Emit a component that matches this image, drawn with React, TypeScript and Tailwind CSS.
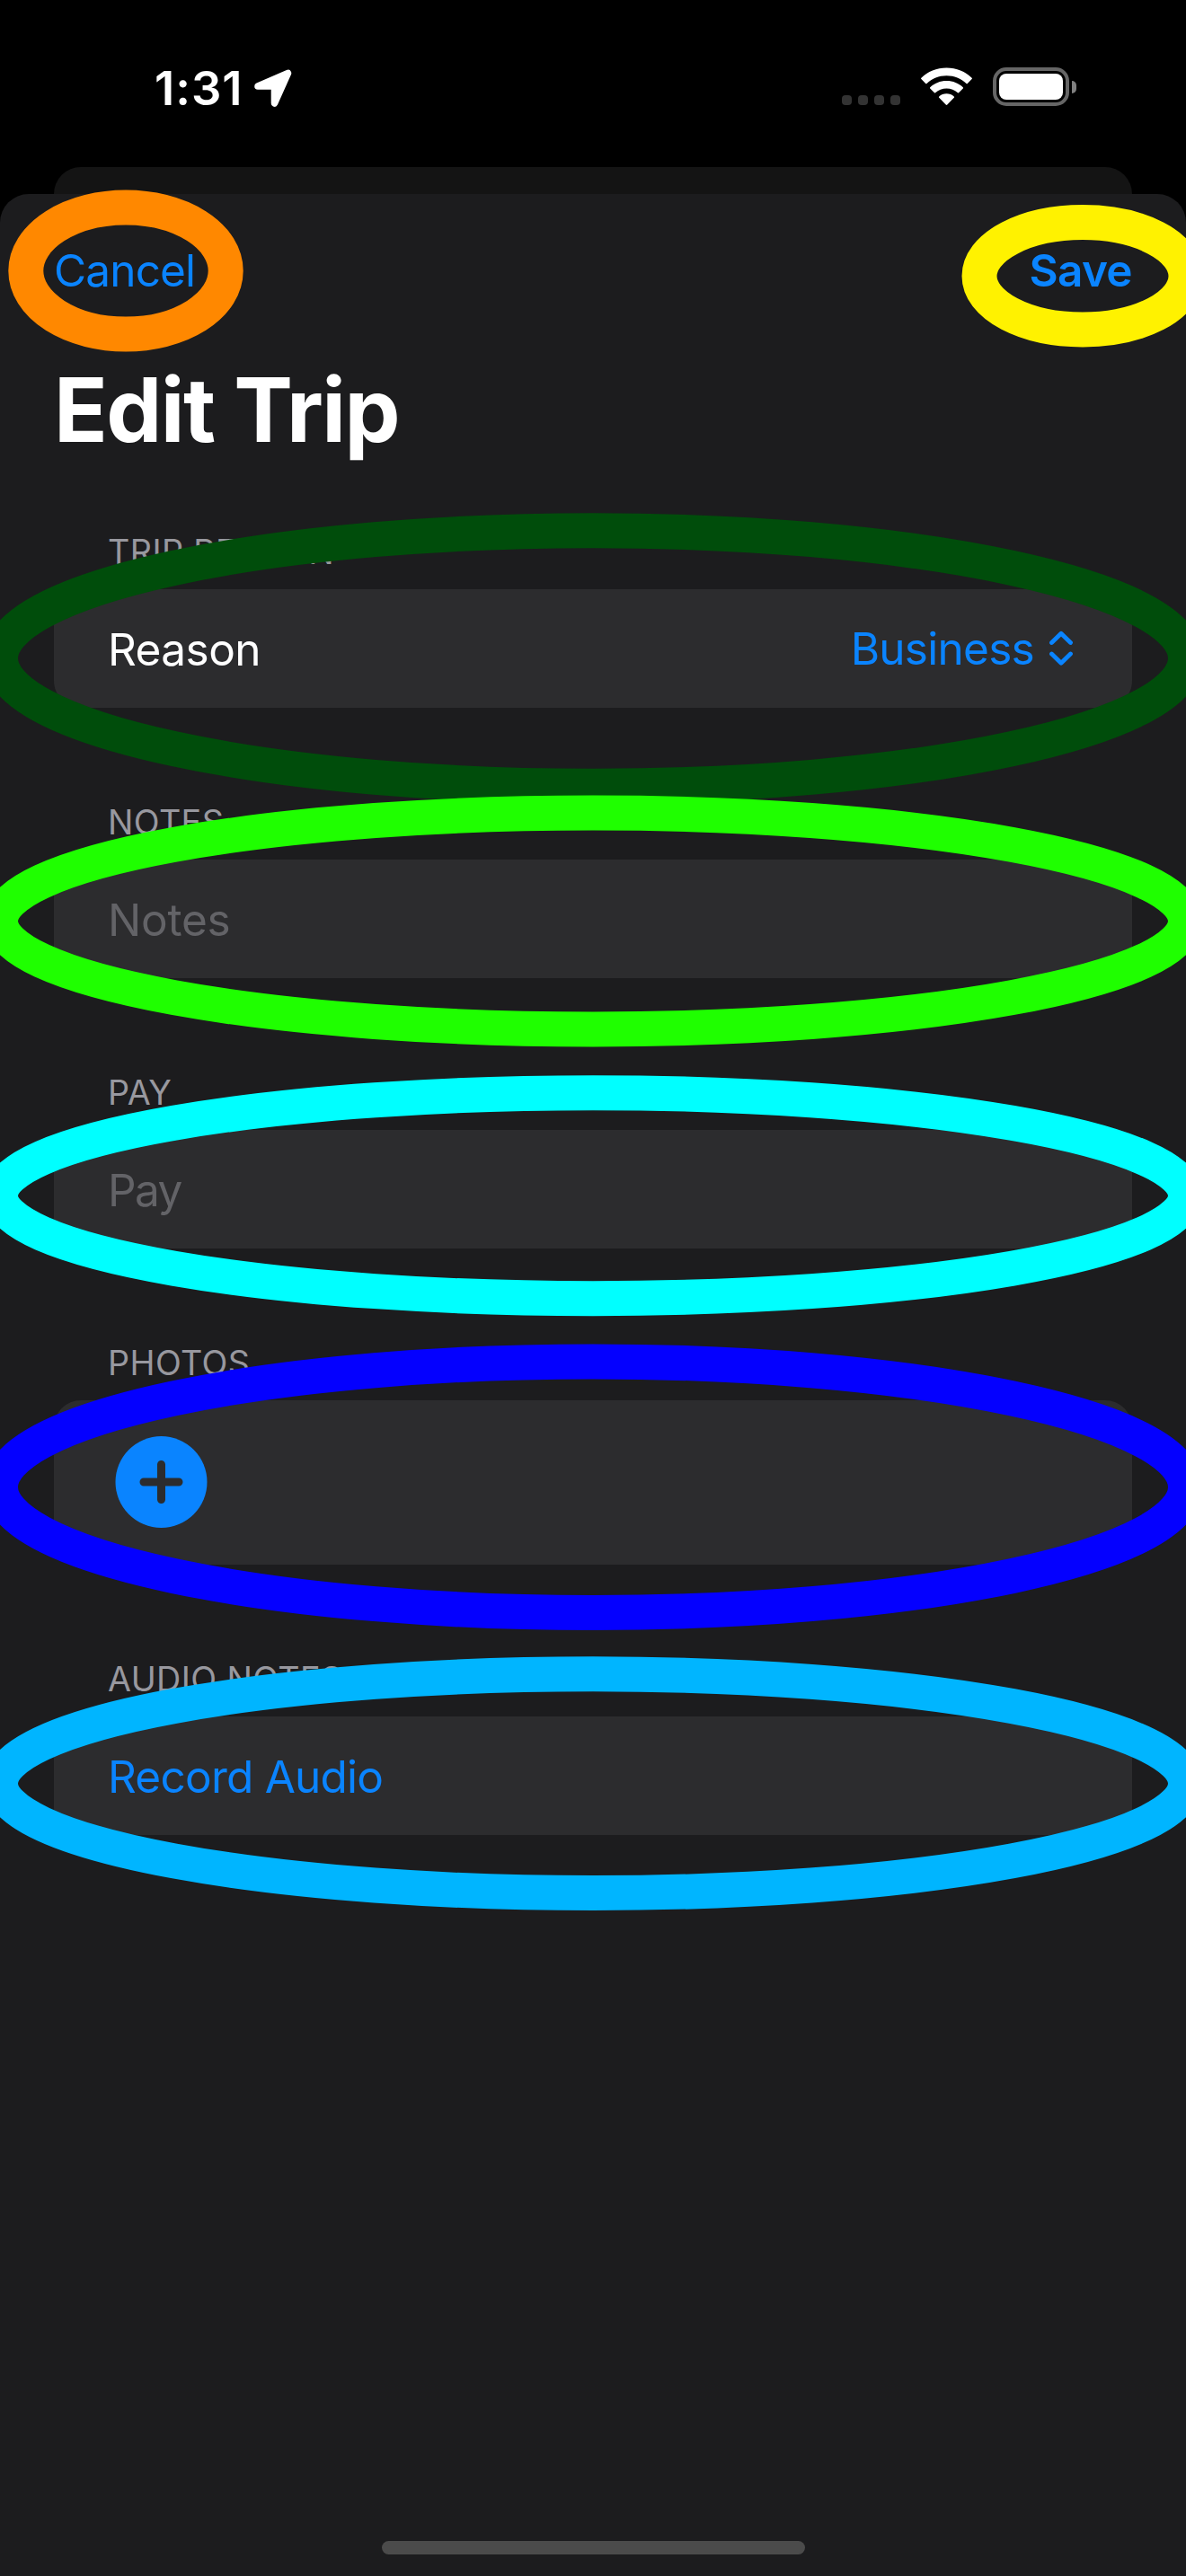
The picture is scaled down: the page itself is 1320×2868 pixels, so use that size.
import React from 'react';

function LocationArrow() {
  return (
    <svg className="h-[44px] w-[44px]" viewBox="0 0 44 44" fill="#fff" stroke="#fff" strokeWidth="7.600" strokeLinejoin="round">
      <path d="M4 20 37.500 5.500 22.500 39V20Z" />
    </svg>
  );
}

function CellularDots() {
  return (
    <div className="mt-[31px] flex gap-[7px]">
      {[0, 1, 2, 3].map((i) => (
        <span key={i} className="h-[11px] w-[11px] rounded-[4px] bg-[#333333]" />
      ))}
    </div>
  );
}

function Wifi() {
  return (
    <svg className="ml-[23px] h-[43px] w-[57px]" viewBox="0 0 57 43" fill="#fff">
      <path d="M28.500 .5C39.500 .5 49.500 4.800 56.600 11.700Q57.300 12.400 56.600 13.100L51.800 18Q51.200 18.600 50.500 18C44.600 12.500 37 9.300 28.500 9.300S12.400 12.500 6.500 18Q5.800 18.600 5.200 18L.4 13.100Q-.3 12.400 .4 11.700C7.500 4.800 17.500 .5 28.500 .5Z" />
      <path d="M28.500 15C35.600 15 42 17.700 46.800 22.200Q47.500 22.900 46.800 23.600L42.300 28.100Q41.600 28.800 40.900 28.200C37.600 25.200 33.200 23.500 28.500 23.500S19.400 25.200 16.100 28.200Q15.400 28.800 14.700 28.100L10.200 23.600Q9.500 22.900 10.200 22.200C15 17.700 21.400 15 28.500 15Z" />
      <path d="M28.500 29.200C31.700 29.200 34.600 30.400 36.800 32.400Q37.500 33.100 36.800 33.800L29.300 41.500Q28.500 42.300 27.700 41.500L20.200 33.800Q19.500 33.100 20.200 32.400C22.400 30.400 25.300 29.200 28.500 29.200Z" />
    </svg>
  );
}

function Battery() {
  return (
    <div className="ml-[23px] flex items-center gap-[3px]">
      <div className="h-[43px] w-[85px] rounded-[15px] border-4 border-[#666666] p-[3px]">
        <div className="h-full w-full rounded-[8px] bg-white" />
      </div>
      <div className="h-[14px] w-[5px] rounded-r-full bg-[#808080]" />
    </div>
  );
}

function Section({ label, children, tall = false }: { label: string; children?: React.ReactNode; tall?: boolean }) {
  return (
    <section>
      <h2 className="mb-[14px] h-[55px] px-[60px] text-[37.7px] leading-[55px] tracking-[0.4px] text-[#98989f]">{label}</h2>
      <div
        className={
          tall
            ? 'flex h-[183px] items-center rounded-[30px] bg-[#2c2c2e] px-[60px]'
            : 'flex h-[132px] items-center justify-between rounded-[30px] bg-[#2c2c2e] px-[60px] text-[49.5px]'
        }
      >
        {children}
      </div>
    </section>
  );
}

const rings = [
  { cx: 140, cy: 301.5, rx: 111.2, ry: 70.5, color: '#ff8800' },
  { cx: 1205, cy: 307.3, rx: 115, ry: 59.7, color: '#fff200' },
  { cx: 660, cy: 733, rx: 659.5, ry: 142.3, color: '#004d0b' },
  { cx: 660, cy: 1025.5, rx: 659.5, ry: 120.4, color: '#1fff00' },
  { cx: 660, cy: 1331.2, rx: 659.5, ry: 114.5, color: '#00ffff' },
  { cx: 660, cy: 1655.7, rx: 659.5, ry: 139.8, color: '#0400ff' },
  { cx: 660, cy: 1985.7, rx: 659.5, ry: 121.9, color: '#00b5ff' },
];

export default function App() {
  return (
    <div className="relative flex h-[2868px] w-[1320px] flex-col overflow-hidden bg-black font-['Inter',sans-serif] text-white">
      <header className="flex h-[186px] items-center justify-between pt-[10px] pr-[122px] pl-[172px]">
        <div className="flex items-center gap-[13px]">
          <span className="w-[98px] text-[52.5px] leading-none font-semibold tracking-[1px] whitespace-nowrap">1:31</span>
          <LocationArrow />
        </div>
        <div className="flex items-start pb-[3px]">
          <CellularDots />
          <Wifi />
          <Battery />
        </div>
      </header>

      <div className="mx-[60px] h-[30px] rounded-t-[30px] bg-[#141414]" />

      <main className="flex flex-1 flex-col rounded-t-[32px] bg-[#1c1c1e] px-[60px]">
        <div className="flex h-[170px] items-center justify-between text-[49.5px] text-[#0a84ff]">
          <button className="tracking-[-0.85px]">Cancel</button>
          <button className="font-semibold tracking-[-0.65px]">Save</button>
        </div>
        <h1 className="mt-px h-[139px] text-[98.5px] leading-[140px] font-bold tracking-[-1.54px]">Edit Trip</h1>

        <div className="mt-[61px] flex flex-col gap-[100px]">
          <Section label="TRIP REASON">
            <span className="pt-[2px] tracking-[-0.55px]">Reason</span>
            <span className="flex items-center gap-[17px] tracking-[-0.72px] text-[#0a84ff]">
              Business
              <svg className="h-[40px] w-[32px]" viewBox="0 0 32 40" fill="none" stroke="#0a84ff" strokeWidth="4.800" strokeLinecap="round" strokeLinejoin="round">
                <path d="M2.500 13.500 13 3.200 23.500 13.500M2.500 26 13 36.300 23.500 26" />
              </svg>
            </span>
          </Section>
          <Section label="NOTES">
            <span className="pt-[2px] tracking-[-0.25px] text-[#636367]">Notes</span>
          </Section>
          <Section label="PAY">
            <span className="pt-[2px] tracking-[-1.6px] text-[#636367]">Pay</span>
          </Section>
          <Section label="PHOTOS" tall>
            <svg className="ml-[8px] h-[103px] w-[103px]" viewBox="0 0 103 103">
              <circle cx="51.500" cy="51" r="51" fill="#0a84ff" />
              <path d="M51.500 31.500V70.500M32 51H71" stroke="#2c2c2e" strokeWidth="9" strokeLinecap="round" />
            </svg>
          </Section>
          <Section label="AUDIO NOTES">
            <span className="pt-[2px] tracking-[-0.76px] text-[#0a84ff]">Record Audio</span>
          </Section>
        </div>

        <div className="mt-auto mb-[24px] h-[15px] w-[471px] self-center rounded-full bg-[#4b4b4b]" />
      </main>

      <svg className="pointer-events-none absolute inset-0 h-full w-full" viewBox="0 0 1320 2868" fill="none" strokeWidth="39">
        {rings.map((r) => (
          <ellipse key={r.color} cx={r.cx} cy={r.cy} rx={r.rx} ry={r.ry} stroke={r.color} />
        ))}
      </svg>
    </div>
  );
}
